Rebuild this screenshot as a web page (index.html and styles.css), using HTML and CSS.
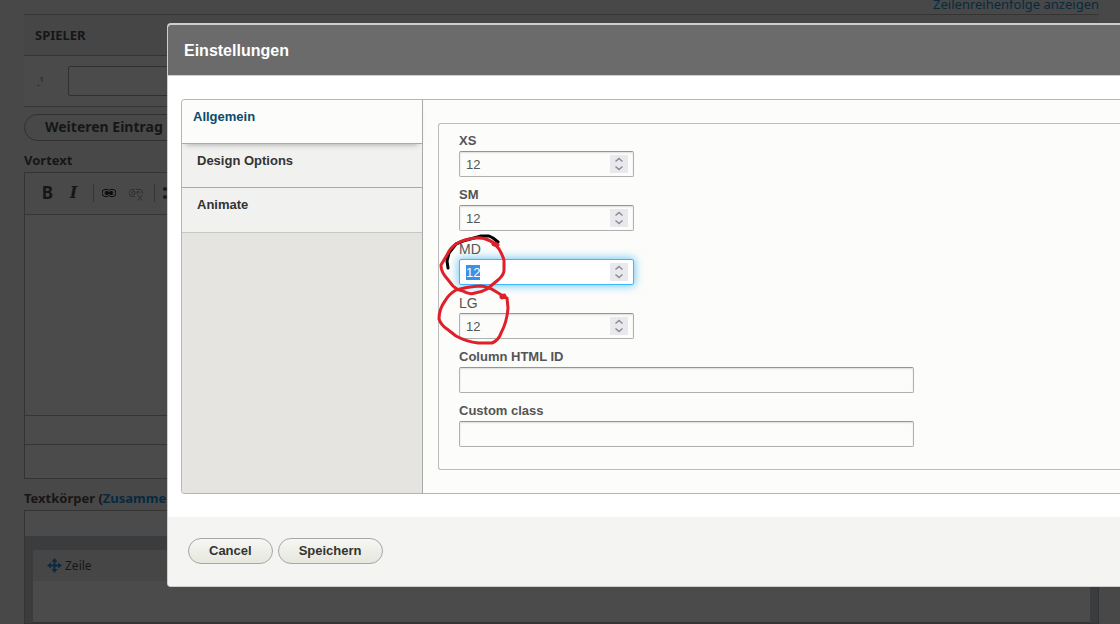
FILE: index.html
```html
<!DOCTYPE html>
<html lang="de">
<head>
<meta charset="utf-8">
<title>Einstellungen</title>
<link rel="stylesheet" href="styles.css">
</head>
<body>
<main class="page">
  <a class="weights-link" href="#">Zeilenreihenfolge anzeigen</a>
  <table class="players">
    <thead><tr><th colspan="2">SPIELER</th></tr></thead>
    <tbody><tr><td class="drag">.<sup>1</sup></td><td><input class="player-input" type="text" aria-label="Spieler"></td></tr></tbody>
  </table>
  <button class="add-button" type="button">Weiteren Eintrag</button>
  <h2 class="field-title">Vortext</h2>
  <section class="editor">
    <div class="toolbar">
      <button class="tool bold" type="button">B</button>
      <button class="tool italic" type="button">I</button>
      <span class="divider"></span>
      <button class="tool" type="button" aria-label="Link"><svg width="14" height="8" viewBox="0 0 14 8" fill="none" stroke="#0c0c0c"><path d="M7 2.500V1.500L6 .5H3a2.500 3 0 0 0 0 7h3l1-1v-1M7 1.500l1-1h3a2.500 3 0 0 1 0 7H8l-1-1M6 2.500H4a1 1.500 0 0 0 0 3h2M8 2.500h2a1 1.500 0 0 1 0 3H8"/><path stroke-width="2" d="M4 4h6"/></svg></button>
      <button class="tool unlink" type="button" aria-label="Unlink"><svg width="15" height="12" viewBox="0 0 15 12" fill="none" stroke="#303030"><path d="M6 .5H3a2.500 3 0 0 0 0 7h3M6 2.500H4a1 1.500 0 0 0 0 3h2M7 .5h4a2.500 3 0 0 1 2.500 4M8 2.500h2l1 1.500M5 4h5M8.500 6l5 5.500M13.500 6l-5 5.500"/></svg></button>
      <span class="divider"></span>
      <button class="tool" type="button" aria-label="Liste"><svg width="14" height="12" viewBox="0 0 14 12" fill="#1a1a1a"><circle cx="2" cy="2" r="2"/><circle cx="2" cy="10" r="2"/><path d="M6 1h8v2H6zM6 9h8v2H6z"/></svg></button>
    </div>
    <div class="editor-area"></div>
    <div class="editor-path"></div>
    <div class="editor-format"></div>
  </section>
  <h2 class="field-title body-title">Textkörper (<a href="#">Zusammenfassung</a>)</h2>
  <section class="builder">
    <div class="row-card">
      <div class="row-head"><svg width="15" height="15" viewBox="0 0 15 15" fill="none" stroke="#0b2a3d" stroke-width="2"><path d="M7.500 2v11M2 7.500h11"/><path fill="#0b2a3d" stroke="none" d="M7.500 0l3 4h-6zM7.500 15l3-4h-6zM0 7.500l4-3v6zM15 7.500l-4-3v6z"/></svg>Zeile</div>
    </div>
  </section>
</main>

<div class="dialog" role="dialog" aria-labelledby="dialog-title">
  <header class="dialog-header"><h1 id="dialog-title">Einstellungen</h1></header>
  <form>
    <div class="dialog-body">
      <div class="tabs">
        <nav class="tab-list">
          <a class="tab active" href="#">Allgemein</a>
          <a class="tab" href="#">Design Options</a>
          <a class="tab" href="#">Animate</a>
        </nav>
        <div class="tab-panel">
          <div class="fields">
            <div class="field"><label for="xs">XS</label><div class="number"><input id="xs" type="number" value="12"><svg class="spin" viewBox="0 0 18 18"><path d="M5.500 6.500l3.500-3 3.500 3M5.500 11.500l3.500 3 3.500-3"/></svg></div></div>
            <div class="field"><label for="sm">SM</label><div class="number"><input id="sm" type="number" value="12"><svg class="spin" viewBox="0 0 18 18"><path d="M5.500 6.500l3.500-3 3.500 3M5.500 11.500l3.500 3 3.500-3"/></svg></div></div>
            <div class="field"><label class="light" for="md">MD</label><div class="number current"><input id="md" type="number" value="12"><svg class="spin" viewBox="0 0 18 18"><path d="M5.500 6.500l3.500-3 3.500 3M5.500 11.500l3.500 3 3.500-3"/></svg></div></div>
            <div class="field"><label class="light" for="lg">LG</label><div class="number"><input id="lg" type="number" value="12"><svg class="spin" viewBox="0 0 18 18"><path d="M5.500 6.500l3.500-3 3.500 3M5.500 11.500l3.500 3 3.500-3"/></svg></div></div>
            <div class="field"><label for="html-id">Column HTML ID</label><input class="text" id="html-id" type="text"></div>
            <div class="field"><label for="custom-class">Custom class</label><input class="text" id="custom-class" type="text"></div>
          </div>
        </div>
      </div>
    </div>
    <footer class="dialog-footer">
      <button class="pill" type="button">Cancel</button>
      <button class="pill" type="submit">Speichern</button>
    </footer>
  </form>
</div>

<svg class="marks" viewBox="436 230 76 120" aria-hidden="true">
  <path class="ink-black" d="M448 268L447 261L449 253L456 244L463 241L474 238L481 236L489 236L493 238L498 242"/>
  <path class="ink-red" d="M495 244Q486 237 476 238Q464 239 456 244Q450 248 447 255L441 265Q441 271 445 276L453 286Q457 290 463 291Q469 295 475 293Q482 292 487 289L498 280Q504 275 504 270V260Q502 254 499 249L494 243"/>
  <path class="ink-red" d="M503 296L495 291Q488 286 478 286Q466 287 456 290Q449 294 445 301Q439 309 439 319Q441 325 447 329L456 336Q467 342 478 343H492Q499 340 501 333Q507 322 508 308L507 298L502 297"/>
  <path class="ink-red blob" d="M494 244l3 1M502 297l2-1"/>
</svg>
<script src="script.js"></script>
</body>
</html>
```
FILE: styles.css
```css
* { box-sizing: border-box; }
body {
  margin: 0;
  height: 100vh;
  overflow: hidden;
  background: #484848;
  color: #161616;
  font: 14px/20px "Noto Sans", sans-serif;
}
button, input { font: inherit; }
a { color: #072a40; text-decoration: none; }
.page { padding: 0 21px 0 24px; height: 100vh; overflow: hidden; display: flex; flex-direction: column; }
.weights-link { align-self: flex-end; margin-top: -6px; height: 20px; flex: none; font-size: 13px; }
.players { border-collapse: collapse; width: 100%; flex: none; }
.players tr { border-top: 1px solid #353535; border-bottom: 1px solid #353535; }
.players th { height: 41px; padding: 0 11px; text-align: left; font-size: 13px; background: #464646; }
.players td { height: 51px; padding: 0; background: #4a4a4a; }
.players .drag { width: 44px; padding-left: 13px; font-size: 10px; line-height: 10px; }
.drag sup { font-size: 7px; }
.player-input { display: block; width: 400px; height: 30px; border: 1px solid #303030; border-radius: 2px; background: #4b4b4b; }
.add-button {
  align-self: flex-start; flex: none;
  width: 240px; height: 27px; margin-top: 7px; padding: 0 20px 2px;
  border: 1px solid #303030; border-radius: 14px;
  background: #484848; color: #161616; font-weight: 700; text-align: left;
}
.field-title { flex: none; margin: 9px 0 2px; font-size: 13px; line-height: 20px; }
.editor { flex: none; border: 1px solid #343434; background: #4b4b4b; }
.toolbar { height: 42px; display: flex; align-items: center; gap: 10px; padding: 0 16px 2px; border-bottom: 1px solid #353535; background: #494949; }
.tool { display: flex; padding: 0; border: 0; background: none; color: #161616; }
.bold { width: 13px; font-size: 17px; font-weight: 700; }
.bold, .italic { justify-content: center; }
.italic { width: 19px; font: italic 700 16px/20px "DejaVu Serif", serif; }
.divider { width: 1px; height: 18px; background: #353535; }
.divider + .tool { margin-left: -2px; }
.unlink { padding: 4px 0 0; margin-left: 3px; }
.editor-area { height: 201px; border-bottom: 1px solid #353535; }
.editor-path { height: 29px; border-bottom: 1px solid #353535; }
.editor-format { height: 33px; }
.builder { flex: 1; padding: 14px 8px 0; border: 1px solid #343434; border-top: 26px solid #4b4b4b; outline: 1px solid #343434; outline-offset: -1px; background: #3b3c3e; }
.row-card { height: 73px; background: #4b4b4b; border-bottom: 1px solid #323436; }
.row-head { height: 31px; display: flex; align-items: center; gap: 3px; padding-left: 14px; background: #464646; font-size: 12px; }

.dialog {
  position: absolute; left: 167px; top: 23px; right: 0;
  border: 2px solid #cecece; border-right: 0; border-bottom-width: 1px; border-left-width: 1px; border-radius: 4px 0 0 4px;
  background: #fff; color: #333;
  font: 13px/20px "Liberation Sans", Arial, sans-serif;
}
.dialog-header { display: flex; align-items: center; height: 51px; padding: 2px 16px 0; background: #6b6b6b; border-bottom: 1px solid #cecece; border-radius: 3px 0 0; color: #fff; }
.dialog-header h1 { margin: 0; font-size: 16px; line-height: 20px; }
.dialog-body { padding: 23px 0 23px 13px; }
.tabs { display: flex; border: 1px solid #b5b5b2; border-right: 0; border-radius: 4px 0 0 4px; background: #fcfcfa; overflow: hidden; }
.tab-list { width: 241px; flex: none; border-right: 1px solid #a9a9a7; background: #e5e4e1; }
.tab { display: block; height: 44px; padding: 7px 15px; border-bottom: 1px solid #a9a9a7; background: #f1f1f0; color: #333; font-weight: 700; }
.tab:last-child { height: 45px; border-bottom-color: #c8c8c6; }
.tab.active { position: relative; padding: 7px 11px; background: #fcfcfa; color: #0a4a6e; box-shadow: 0 4px 6px -4px #999; }
.tab-panel { flex: 1; padding: 23px 0 23px 15px; }
.fields { display: flex; flex-direction: column; gap: 8px; padding: 7px 20px 22px; border: 1px solid #bdbdbb; border-right: 0; border-radius: 3px 0 0 3px; }
.field label { display: block; width: max-content; line-height: 20px; font-size: 13px; font-weight: 700; color: #555; }
.field .light { font-weight: 400; font-size: 14px; }
.number { display: flex; align-items: center; width: 175px; padding-right: 5px; }
.number, .text { height: 26px; border: 1px solid #b0b0ae; border-top-color: #949492; border-radius: 2px; background: #fcfcfa; box-shadow: inset 0 1px 2px #ddd; color: #555; }
.number input { flex: 1; min-width: 0; height: 24px; padding: 0 6px; border: 0; outline: 0; background: none; color: inherit; font-size: 13px; appearance: textfield; }
.number input::-webkit-inner-spin-button { appearance: none; margin: 0; }
.number input::selection { background: #3992e8; color: #fff; }
.number.current { border-color: #40b6ff; background: #fff; box-shadow: 0 0 8px 1px #71c8f5; }
.spin { width: 18px; height: 18px; background: #e9e9ed; fill: none; stroke: #8b8b98; stroke-width: 1.5; }
.text { display: block; width: 100%; max-width: 455px; padding: 0 6px; }
.dialog-footer { display: flex; gap: 5px; padding: 21px 20px 22px; background: #f4f4f2; border-radius: 0 0 0 3px; }
.pill { height: 26px; padding: 0 20px; border: 1px solid #a6a6a6; border-radius: 13px; background: linear-gradient(#f6f6f3, #e7e7df); color: #333; font-weight: 700; }
.marks { position: absolute; left: 436px; top: 230px; width: 76px; height: 120px; fill: none; stroke-width: 3; stroke-linecap: round; stroke-linejoin: round; pointer-events: none; }
.ink-black { stroke: #000; }
.ink-red { stroke: #df1f29; }
.blob { stroke-width: 5; }
```
FILE: script.js
```js
const current = document.getElementById("md");
current.focus();
current.select();
```
